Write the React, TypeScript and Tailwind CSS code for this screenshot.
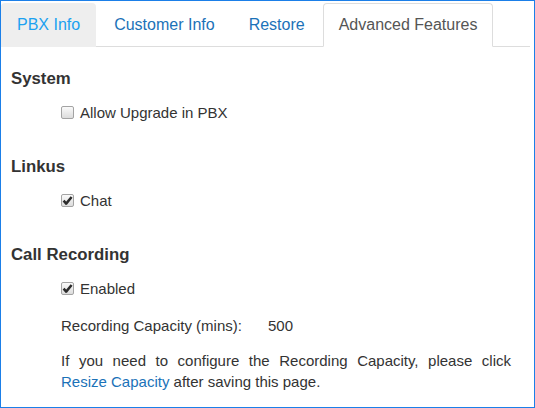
import { Fragment } from "react";

const tabs = [
  { label: "PBX Info", state: "hover" },
  { label: "Customer Info", state: "idle" },
  { label: "Restore", state: "idle" },
  { label: "Advanced Features", state: "active" },
];

const CheckBox = ({ checked }: { checked: boolean }) => (
  <span className="flex items-center justify-center w-[13px] h-[13px] rounded-[2px] border border-[#a3a3a3] bg-gradient-to-b from-[#fafafa] to-[#dcdcdc] shrink-0">
    {checked && (
      <svg width="11" height="11" viewBox="0 0 11 11">
        <path
          d="M1.6 5.6 L4.2 8.6 L9.6 2"
          fill="none"
          stroke="#2b2b2b"
          strokeWidth="2.5"
          strokeLinejoin="round"
        />
      </svg>
    )}
  </span>
);

const Option = ({ label, checked }: { label: string; checked: boolean }) => (
  <div className="flex items-center gap-[6px] ml-[50px] h-[21px] leading-[21px] text-[15px] text-[#333]">
    <CheckBox checked={checked} />
    <span>{label}</span>
  </div>
);

const Heading = ({ children, className }: { children: string; className?: string }) => (
  <h3 className={`h-[22px] leading-[22px] text-[16.8px] font-bold text-[#333] ${className ?? ""}`}>
    {children}
  </h3>
);

export default function App() {
  return (
    <div
      className="w-[535px] h-[408px] border border-[#1b7fe8] bg-white overflow-hidden"
      style={{ fontFamily: '"Liberation Sans", Arial, sans-serif' }}
    >
      <ul className="flex gap-[2px] pt-[2px] mr-[4px] border-b border-[#ddd]">
        {tabs.map((t) => (
          <li key={t.label} className="-mb-px">
            <a
              className={
                t.state === "active"
                  ? "flex items-center h-[44px] px-[15px] text-[16px] rounded-t-[4px] border border-[#ddd] border-b-white bg-white text-[#555]"
                  : t.state === "hover"
                    ? "flex items-center h-[44px] px-[15px] text-[16px] rounded-t-[4px] border border-transparent bg-[#eee] text-[#1ca1f0]"
                    : "flex items-center h-[44px] px-[15px] text-[16px] rounded-t-[4px] border border-transparent text-[#1b72b8]"
              }
            >
              {t.label}
            </a>
          </li>
        ))}
      </ul>

      <div className="pl-[10px] pt-[21px]">
        <Fragment>
          <Heading>System</Heading>
          <div className="mt-[12px]">
            <Option label="Allow Upgrade in PBX" checked={false} />
          </div>
        </Fragment>

        <Fragment>
          <Heading className="mt-[33px]">Linkus</Heading>
          <div className="mt-[12px]">
            <Option label="Chat" checked />
          </div>
        </Fragment>

        <Fragment>
          <Heading className="mt-[33px]">Call Recording</Heading>
          <div className="mt-[12px]">
            <Option label="Enabled" checked />
          </div>
          <div className="ml-[50px] mt-[16px] h-[21px] leading-[21px] text-[15px] text-[#333] flex">
            <span className="w-[207px]">Recording Capacity (mins):</span>
            <span>500</span>
          </div>
          <p className="ml-[50px] mt-[13.5px] w-[450px] text-justify leading-[21.5px] text-[15px] text-[#333]">
            If you need to configure the Recording Capacity, please click{" "}
            <a className="text-[#1b72b8] cursor-pointer">Resize Capacity</a> after saving this
            page.
          </p>
        </Fragment>
      </div>
    </div>
  );
}
